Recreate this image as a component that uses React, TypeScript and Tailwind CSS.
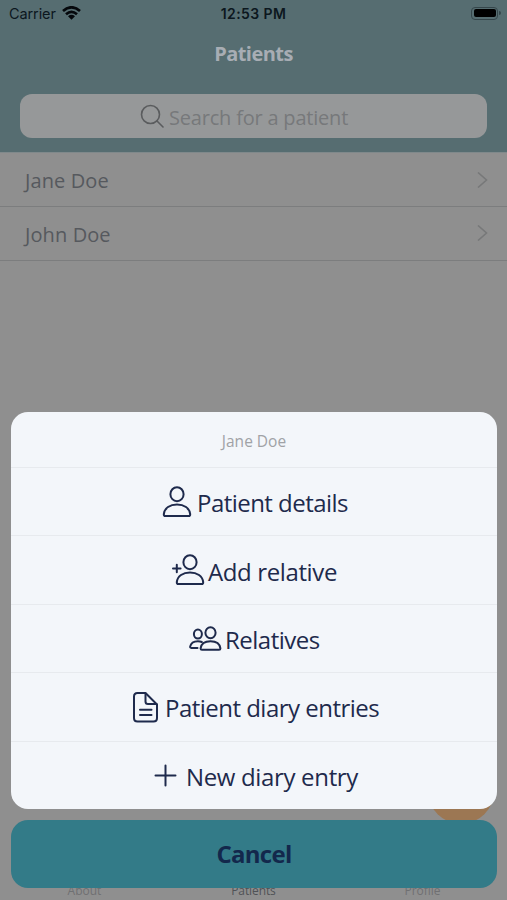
import type { ReactNode } from "react";

const stroke = {
  fill: "none",
  stroke: "currentColor",
  strokeWidth: 2,
  strokeLinecap: "round" as const,
  strokeLinejoin: "round" as const,
};

function PersonIcon() {
  return (
    <svg className="h-8 w-[30px] shrink-0" viewBox="0 0 30 32" {...stroke}>
      <ellipse cx="15" cy="8.2" rx="6.6" ry="7" />
      <path d="M3.2 30Q1.800 30 1.800 28.200C2.4 22 8 18.400 15 18.400S27.600 22 28.200 28.200Q28.200 30 26.800 30Z" />
    </svg>
  );
}

function AddPersonIcon() {
  return (
    <svg className="h-8 w-[34px] shrink-0" viewBox="0 0 34 32" {...stroke}>
      <ellipse cx="19" cy="8.2" rx="6.6" ry="7" />
      <path d="M7.200 30Q5.800 30 5.800 28.200C6.400 22 12 18.400 19 18.400S31.600 22 32.200 28.200Q32.200 30 30.800 30Z" />
      <path d="M2 14.500H9.600M5.800 10.700V18.300" />
    </svg>
  );
}

function PeopleIcon() {
  return (
    <svg className="h-[26px] w-[34px] shrink-0" viewBox="0 0 34 26" {...stroke}>
      <ellipse cx="22.500" cy="6.800" rx="5.100" ry="5.500" />
      <path d="M14 23.800Q12.600 23.800 12.600 22.400C13.200 17.600 17.400 15.200 22.500 15.200S31.800 17.600 32.400 22.400Q32.400 23.800 31 23.800Z" />
      <ellipse cx="9.900" cy="8.100" rx="4" ry="4.500" />
      <path d="M9.500 21.900H3.200Q1.900 21.900 2.200 20.400C3 16.800 6 15.200 9.900 15.200Q12 15.200 13.800 16" />
    </svg>
  );
}

function DocumentIcon() {
  return (
    <svg className="h-8 w-[27px] shrink-0" viewBox="0 0 27 32" {...stroke}>
      <path d="M5.500 2H13.500L25 13.500V27Q25 30.500 21.500 30.500H5.500Q2 30.500 2 27V5.500Q2 2 5.500 2Z" />
      <path d="M13.500 2.500V10.500Q13.500 13 16 13H24.500M8 18.700H19.500M8 24H19.500" />
    </svg>
  );
}

function PlusIcon() {
  return (
    <svg className="h-[23px] w-[23px] shrink-0" viewBox="0 0 23 23" {...stroke}>
      <path d="M1.500 11.500H21.500M11.500 1.500V21.500" />
    </svg>
  );
}

function Action({ children, pad }: { children: ReactNode; pad: string }) {
  return (
    <button className={`flex h-[68.400px] w-full items-center border-t border-[#e7eaee] ${pad}`}>
      {children}
    </button>
  );
}

const label = "whitespace-nowrap text-[24px] leading-8 pt-[3px]";

function Patient({ name, className }: { name: string; className: string }) {
  return (
    <div className="flex h-[54px] items-center justify-between border-b border-[#7c7d7e] pl-[25px] pr-[18px]">
      <span className="pt-[3px] text-[20px] tracking-[0.1px] text-[#56595e]">{name}</span>
      <svg className={`h-4 w-[13px] ${className}`} viewBox="0 0 13 16" fill="none" stroke="#777879" strokeWidth="1.600">
        <path d="M2 0.500L10.500 8L2 15.500" />
      </svg>
    </div>
  );
}

export default function App() {
  return (
    <div className="relative flex h-[900px] w-[507px] flex-col overflow-hidden bg-[#8f8f8f] font-['Open_Sans','Noto_Sans',sans-serif]">
      <header className="h-[153px] shrink-0 border-b border-[#80898b] bg-[#566d71]">
        <div className="grid h-7 grid-cols-3 items-center font-['Inter',sans-serif] text-[#0c171e]">
          <div className="flex items-center gap-[6px] pl-[9px] text-[14.500px] tracking-[-0.1px]">
            <span>Carrier</span>
            <svg className="mb-[2px] h-[14px] w-[19px]" viewBox="0 0 19 14" fill="none" stroke="#05080c" strokeWidth="2.700">
              <path d="M1 5Q9.500 -2.400 18 5M4 8.300Q9.500 3.600 15 8.300" />
              <path d="M6 10.300Q9.500 7.400 13 10.300L9.500 13.800Z" fill="#05080c" stroke="none" />
            </svg>
          </div>
          <div className="whitespace-nowrap pb-px text-center text-[14px] font-semibold tracking-[0.4px]">12:53 PM</div>
          <div className="flex items-center justify-end gap-px pb-[2px] pr-[6px]">
            <div className="h-[13px] w-[27px] rounded-[4px] border border-[#35464b] p-[1.500px]">
              <div className="h-full rounded-[2px] bg-black" />
            </div>
            <div className="h-1 w-[2px] rounded-r bg-[#35464b]" />
          </div>
        </div>
        <h1 className="mt-[11px] text-center text-[20px] font-bold leading-[30px] tracking-[-0.55px] text-[#a8adb4]">Patients</h1>
        <div className="mx-5 mt-[25px] flex h-[44px] items-center rounded-[12px] bg-[#969899] pl-[120px]">
          <svg className="h-6 w-6" viewBox="0 0 24 24" fill="none" stroke="#5a5c5e" strokeWidth="1.600" strokeLinecap="round">
            <circle cx="10.500" cy="10.500" r="9" />
            <path d="M17 17L23 23" />
          </svg>
          <span className="ml-[5px] whitespace-nowrap pt-[3px] text-[20px] tracking-[-0.2px] text-[#77797b]">Search for a patient</span>
        </div>
      </header>
      <Patient name="Jane Doe" className="" />
      <Patient name="John Doe" className="mb-[2px]" />
      <div className="grow" />
      <nav className="grid h-[19px] grid-cols-3 text-center text-[12px] leading-[20px] text-[#6f7072]">
        <span>About</span>
        <span className="tracking-[-0.1px] text-[#4f5256]">Patients</span>
        <span>Profile</span>
      </nav>
      <div className="absolute left-[428px] top-[758px] h-[66px] w-[66px] rounded-full bg-[#9c7753]" />

      <div className="absolute inset-x-0 bottom-[12px] flex flex-col gap-[10.500px] pl-[11px] pr-[10px] text-[#1e2a4c]">
        <div className="overflow-hidden rounded-[17px] bg-[#f3f6fa]">
          <div className="h-[55.500px] pt-[19px] text-center text-[15.500px] leading-[21px] text-[#a0a2a6]">Jane Doe</div>
          <Action pad="pl-[151px]">
            <PersonIcon />
            <span className={`${label} ml-[5px] tracking-[-0.54px]`}>Patient details</span>
          </Action>
          <Action pad="pl-[160px]">
            <AddPersonIcon />
            <span className={`${label} ml-[3px] tracking-[-0.38px]`}>Add relative</span>
          </Action>
          <Action pad="pl-[177px]">
            <PeopleIcon />
            <span className={`${label} ml-[3px] tracking-[-0.5px]`}>Relatives</span>
          </Action>
          <Action pad="pl-[121px]">
            <DocumentIcon />
            <span className={`${label} ml-[6px] tracking-[-0.52px]`}>Patient diary entries</span>
          </Action>
          <Action pad="pl-[143px]">
            <PlusIcon />
            <span className={`${label} ml-[9px] tracking-[-0.34px]`}>New diary entry</span>
          </Action>
        </div>
        <button className="h-[68.500px] rounded-[17px] bg-[#337b88] pt-px text-[24px] font-bold tracking-[-0.7px] text-[#13284c]">Cancel</button>
      </div>
    </div>
  );
}
